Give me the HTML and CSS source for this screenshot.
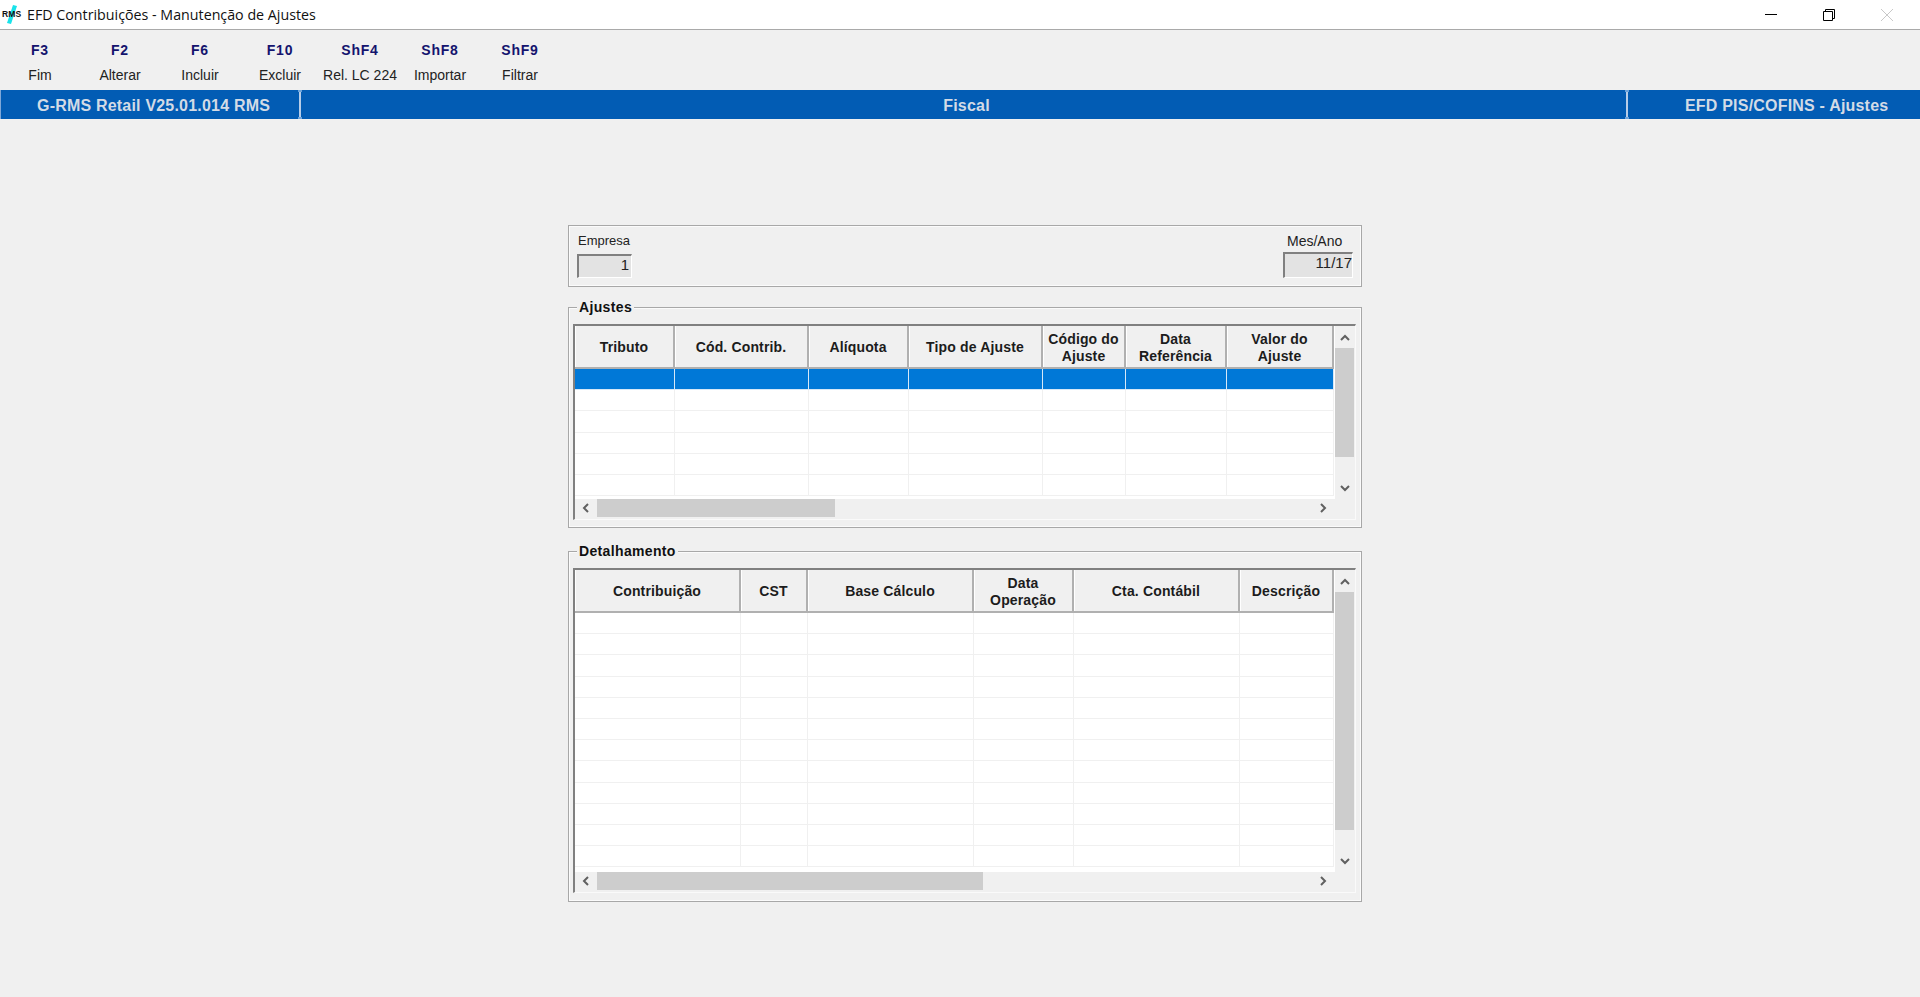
FILE: index.html
```html
<!DOCTYPE html>
<html lang="pt-BR">
<head>
<meta charset="utf-8">
<title>EFD Contribuições - Manutenção de Ajustes</title>
<link rel="stylesheet" href="styles.css">
</head>
<body>
<header class="titlebar">
  <div class="logo">
    <svg class="logo-slash" width="14" height="22" viewBox="0 0 14 22"><path d="M9 1 L13 2 L7 20 L3 19 Z" fill="#19e3ea"/></svg>
    <span class="logo-text">RMS</span>
  </div>
  <span class="title">EFD Contribuições - Manutenção de Ajustes</span>
  <div class="winctl">
    <span class="winbtn"><svg width="14" height="14" viewBox="0 0 14 14"><path d="M1 6.5H13" stroke="#000" fill="none"/></svg></span>
    <span class="winbtn"><svg width="14" height="14" viewBox="0 0 14 14"><path d="M3.5 3.5V1.5H12.5V10.5H10.5M1.5 3.5H10.5V12.5H1.5Z" stroke="#000" fill="none"/></svg></span>
    <span class="winbtn"><svg width="14" height="14" viewBox="0 0 14 14"><path d="M1 1L13 13M13 1L1 13" stroke="#c8c8c8" fill="none"/></svg></span>
  </div>
</header>

<nav class="toolbar">
  <div class="tool"><b>F3</b><span>Fim</span></div>
  <div class="tool"><b>F2</b><span>Alterar</span></div>
  <div class="tool"><b>F6</b><span>Incluir</span></div>
  <div class="tool"><b>F10</b><span>Excluir</span></div>
  <div class="tool"><b>ShF4</b><span>Rel. LC 224</span></div>
  <div class="tool"><b>ShF8</b><span>Importar</span></div>
  <div class="tool"><b>ShF9</b><span>Filtrar</span></div>
</nav>

<div class="statusbar">
  <div class="pane pane-left">G-RMS Retail V25.01.014 RMS</div>
  <div class="pane pane-mid">Fiscal</div>
  <div class="pane pane-right">EFD PIS/COFINS - Ajustes</div>
</div>

<main class="content">
  <section class="panel panel-top">
    <div class="field">
      <label class="field-label field-label-emp">Empresa</label>
      <div class="readonly readonly-emp">1</div>
    </div>
    <div class="field">
      <label class="field-label field-label-mes">Mes/Ano</label>
      <div class="readonly readonly-mes">11/17</div>
    </div>
  </section>

  <section class="panel group group-ajustes">
    <h2 class="legend">Ajustes</h2>
    <div class="gridbox">
      <div class="griddata cols-a">
        <div class="row head">
          <div class="cell">Tributo</div><div class="cell">Cód. Contrib.</div><div class="cell">Alíquota</div><div class="cell">Tipo de Ajuste</div><div class="cell">Código do<br>Ajuste</div><div class="cell">Data<br>Referência</div><div class="cell">Valor do<br>Ajuste</div>
        </div>
        <div class="row selected"><i></i><i></i><i></i><i></i><i></i><i></i><i></i></div>
        <div class="row"><i></i><i></i><i></i><i></i><i></i><i></i><i></i></div>
        <div class="row"><i></i><i></i><i></i><i></i><i></i><i></i><i></i></div>
        <div class="row"><i></i><i></i><i></i><i></i><i></i><i></i><i></i></div>
        <div class="row"><i></i><i></i><i></i><i></i><i></i><i></i><i></i></div>
        <div class="row"><i></i><i></i><i></i><i></i><i></i><i></i><i></i></div>
      </div>
      <div class="vscroll">
        <span class="arrow arrow-up"><svg width="12" height="8" viewBox="0 0 12 8"><path d="M2 6L6 2L10 6" stroke="#606060" stroke-width="2" fill="none"/></svg></span>
        <div class="vthumb vthumb-a"></div>
        <div class="track"></div>
        <span class="arrow"><svg width="12" height="8" viewBox="0 0 12 8"><path d="M2 2L6 6L10 2" stroke="#606060" stroke-width="2" fill="none"/></svg></span>
      </div>
      <div class="hscroll">
        <span class="arrow arrow-h"><svg width="8" height="12" viewBox="0 0 8 12"><path d="M6 2L2 6L6 10" stroke="#606060" stroke-width="2" fill="none"/></svg></span>
        <div class="hthumb hthumb-a"></div>
        <div class="track"></div>
        <span class="arrow arrow-h"><svg width="8" height="12" viewBox="0 0 8 12"><path d="M2 2L6 6L2 10" stroke="#606060" stroke-width="2" fill="none"/></svg></span>
      </div>
      <div class="corner"></div>
    </div>
  </section>

  <section class="panel group group-detalhe">
    <h2 class="legend">Detalhamento</h2>
    <div class="gridbox">
      <div class="griddata cols-d">
        <div class="row head">
          <div class="cell">Contribuição</div><div class="cell">CST</div><div class="cell">Base Cálculo</div><div class="cell">Data<br>Operação</div><div class="cell">Cta. Contábil</div><div class="cell">Descrição</div>
        </div>
        <div class="row"><i></i><i></i><i></i><i></i><i></i><i></i></div>
        <div class="row"><i></i><i></i><i></i><i></i><i></i><i></i></div>
        <div class="row"><i></i><i></i><i></i><i></i><i></i><i></i></div>
        <div class="row"><i></i><i></i><i></i><i></i><i></i><i></i></div>
        <div class="row"><i></i><i></i><i></i><i></i><i></i><i></i></div>
        <div class="row"><i></i><i></i><i></i><i></i><i></i><i></i></div>
        <div class="row"><i></i><i></i><i></i><i></i><i></i><i></i></div>
        <div class="row"><i></i><i></i><i></i><i></i><i></i><i></i></div>
        <div class="row"><i></i><i></i><i></i><i></i><i></i><i></i></div>
        <div class="row"><i></i><i></i><i></i><i></i><i></i><i></i></div>
        <div class="row"><i></i><i></i><i></i><i></i><i></i><i></i></div>
        <div class="row"><i></i><i></i><i></i><i></i><i></i><i></i></div>
      </div>
      <div class="vscroll">
        <span class="arrow arrow-up"><svg width="12" height="8" viewBox="0 0 12 8"><path d="M2 6L6 2L10 6" stroke="#606060" stroke-width="2" fill="none"/></svg></span>
        <div class="vthumb vthumb-d"></div>
        <div class="track"></div>
        <span class="arrow"><svg width="12" height="8" viewBox="0 0 12 8"><path d="M2 2L6 6L10 2" stroke="#606060" stroke-width="2" fill="none"/></svg></span>
      </div>
      <div class="hscroll">
        <span class="arrow arrow-h"><svg width="8" height="12" viewBox="0 0 8 12"><path d="M6 2L2 6L6 10" stroke="#606060" stroke-width="2" fill="none"/></svg></span>
        <div class="hthumb hthumb-d"></div>
        <div class="track"></div>
        <span class="arrow arrow-h"><svg width="8" height="12" viewBox="0 0 8 12"><path d="M2 2L6 6L2 10" stroke="#606060" stroke-width="2" fill="none"/></svg></span>
      </div>
      <div class="corner"></div>
    </div>
  </section>
</main>
</body>
</html>
```

FILE: styles.css
```css
*, *::before, *::after { box-sizing: border-box; }
html, body { margin: 0; height: 100%; }
body {
  background: #f0f0f0;
  font-family: "Liberation Sans", Arial, sans-serif;
  color: #111;
  overflow: hidden;
}

/* title bar */
.titlebar {
  height: 30px;
  background: #fff;
  border-bottom: 1px solid #a9a9a9;
  display: flex;
  align-items: center;
}
.logo { position: relative; width: 27px; height: 29px; flex: none; }
.logo-slash { position: absolute; left: 4px; top: 4px; }
.logo-text {
  position: absolute; left: 2px; top: 9px;
  font: bold 8.5px/10px "Liberation Sans", Arial, sans-serif;
  letter-spacing: .2px;
  color: #111;
}
.title { font: 14.25px/29px "Open Sans", sans-serif; color: #111; }
.winctl { margin-left: auto; display: flex; margin-right: 26px; gap: 44px; }
.winbtn { display: flex; width: 14px; height: 14px; }

/* toolbar */
.toolbar { height: 60px; display: flex; }
.tool {
  width: 80px;
  display: flex; flex-direction: column; align-items: center;
  padding-top: 11px;
}
.tool b {
  font: bold 14px/18px "Liberation Sans", Arial, sans-serif;
  letter-spacing: .8px;
  color: #14146e;
}
.tool span { font-size: 14px; line-height: 18px; margin-top: 7px; color: #222; }

/* blue bar */
.statusbar {
  height: 29px;
  background: #025cb4;
  display: flex;
  color: #d3dbe6;
  font: bold 16px/31px "Liberation Sans", Arial, sans-serif;
  letter-spacing: .2px;
  border-left: 1px solid #7fa8d8;
}
.pane { position: relative; white-space: nowrap; }
.pane-left { width: 300px; padding-left: 36px; border-right: 2px solid #b7cde8; }
.pane-mid { flex: 1; text-align: center; padding-left: 6px; border-right: 2px solid #b7cde8; }
.pane-right { width: 292px; padding-left: 57px; }
.pane-left::after, .pane-mid::after {
  content: ""; position: absolute; right: -3px; top: 0;
  width: 4px; height: 29px;
  border-top: 2px solid #6ba3dc; border-bottom: 2px solid #6ba3dc;
}

/* form */
.content {
  padding: 106px 0 0 568px;
  width: 1362px;
  display: flex; flex-direction: column;
}
.panel {
  border: 1px solid #a8a8a8;
  box-shadow: inset 0 0 0 1px #fbfbfb;
  width: 794px;
}
.panel-top {
  height: 62px;
  display: flex; justify-content: space-between; align-items: flex-end;
  padding: 0 8px 8px;
}
.field { display: flex; flex-direction: column; }
.field-label { line-height: 16px; color: #222; }
.field-label-emp { font-size: 13px; padding-left: 1px; margin-bottom: 5px; }
.field-label-mes { font-size: 14px; padding-left: 4px; margin-bottom: 3px; }
.readonly {
  background: #e3e3e3;
  border-top: 2px solid #808080;
  border-left: 2px solid #808080;
  border-right: 1px solid #fff;
  border-bottom: 1px solid #fff;
  text-align: right;
  font-size: 15px; line-height: 18px;
  color: #222;
}
.readonly-emp { width: 55px; height: 24px; padding: 0 2px 0 0; }
.readonly-mes { width: 70px; height: 26px; padding: 0; }

.group { position: relative; padding: 16px 5px 0 4px; }
.group-ajustes { height: 221px; margin-top: 20px; }
.group-detalhe { height: 351px; margin-top: 23px; }
.legend {
  position: absolute; left: 8px; top: -9px;
  margin: 0; padding: 0 2px;
  background: #f0f0f0;
  font: bold 14px/17px "Liberation Sans", Arial, sans-serif;
  letter-spacing: .35px;
  color: #111;
}

.gridbox {
  border-top: 2px solid #808080;
  border-left: 2px solid #808080;
  border-right: 1px solid #fafafa;
  border-bottom: 1px solid #fafafa;
  display: grid;
  grid-template-columns: 759px 21px;
  grid-template-rows: 1fr 20px;
  overflow: hidden;
}
.group-ajustes .gridbox { height: 196px; }
.group-detalhe .gridbox { height: 325px; }

.griddata { background: #fff; overflow: hidden; border-bottom: 1px solid #fff; }
.row { display: grid; height: 21.2px; }
.cols-a .row { grid-template-columns: 100px 134px 100px 134px 83px 101px 107px; }
.cols-d .row { grid-template-columns: 166px 67px 166px 100px 166px 94px; }
.row i {
  display: block;
  border-right: 1px solid #f0f0f0;
  border-bottom: 1px solid #f0f0f0;
}
.row.head { height: 43px; background: #f0f0f0; }
.cell {
  display: flex; align-items: center; justify-content: center; text-align: center;
  padding-top: 2px;
  font: bold 14px/17px "Liberation Sans", Arial, sans-serif;
  letter-spacing: .15px;
  color: #1c1c1c;
  border-right: 2px solid #b0b0b0;
  border-bottom: 2px solid #b0b0b0;
  box-shadow: inset 1px 0 0 #fff;
}
.row.selected { background: #0078d7; }
.row.selected i { border-color: #d6e8f7; }

.vscroll {
  background: #f0f0f0;
  border-left: 1px solid #fff;
  display: flex; flex-direction: column;
  width: 20px;
}
.hscroll {
  background: #f0f0f0;
  display: flex;
  padding-bottom: 2px;
}
.corner { background: #f0f0f0; }
.arrow {
  flex: none; height: 22px;
  display: flex; align-items: center; justify-content: center;
}
.arrow-up { padding-top: 2px; }
.arrow-h { width: 22px; height: 18px; }
.track { flex: 1; }
.vthumb { background: #cdcdcd; }
.hthumb { background: #cdcdcd; }
.vthumb-a { height: 109px; }
.vthumb-d { height: 238px; }
.hthumb-a { width: 238px; }
.hthumb-d { width: 386px; }
```
